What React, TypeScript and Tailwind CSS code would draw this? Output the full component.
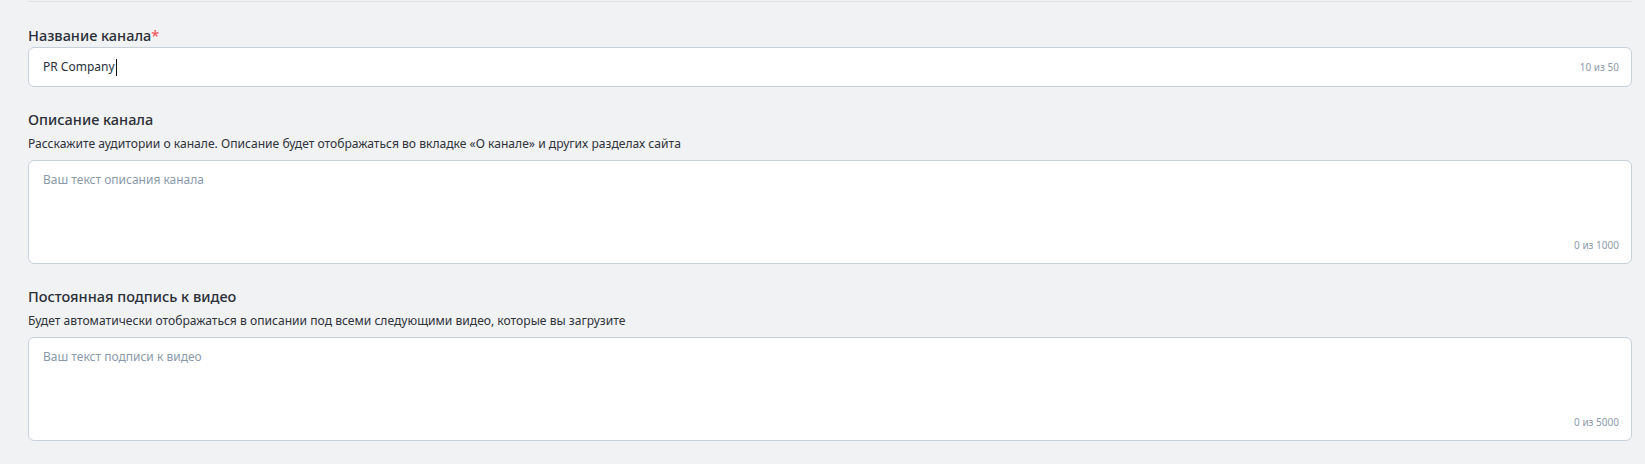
import React from 'react'

interface AreaProps {
  label: string
  hint: string
  placeholder: string
  max: number
}

function AreaField({ label, hint, placeholder, max }: AreaProps): JSX.Element {
  return (
    <div className="mt-[22px]">
      <div className="text-[14.5px] leading-[20px] font-medium text-[#2b2f38]">{label}</div>
      <div className="mt-[7px] text-[12.1px] leading-[16px] text-[#2f333a]">{hint}</div>
      <div className="relative mt-[8px] h-[104px] rounded-[6px] border border-[#c8d0da] bg-white px-[14px] pt-[11px]">
        <div className="text-[12px] leading-[16px] text-[#8a9aab]">{placeholder}</div>
        {/* char counter */}
        <span className="absolute right-[12px] bottom-[12px] text-[10px] leading-[12px] text-[#8e9bab]">
          0 из {max}
        </span>
      </div>
    </div>
  )
}

export default function App(): JSX.Element {
  const name = 'PR Company'

  return (
    <div className="min-h-screen bg-[#f1f2f4] pl-[28px] pr-[13px] pt-[1px] font-['Noto_Sans',sans-serif]">
      <div className="border-t border-[#dfe2e6] pt-[23px]">
        {/* Channel name */}
        <div className="text-[14.5px] leading-[20px] font-medium text-[#2b2f38]">
          Название канала<span className="text-[#f05a5a]">*</span>
        </div>
        <div className="mt-[2px] flex h-[40px] items-center justify-between rounded-[6px] border border-[#c8d0da] bg-white pl-[14px] pr-[12px]">
          <div className="flex items-center text-[12px] leading-[16px] text-[#2a2f3a]">
            {name}
            <span className="ml-[1px] h-[17px] w-[1px] bg-[#111]" />
          </div>
          <span className="text-[10px] leading-[12px] text-[#8e9bab]">{name.length} из 50</span>
        </div>

        <AreaField
          label="Описание канала"
          hint="Расскажите аудитории о канале. Описание будет отображаться во вкладке «О канале» и других разделах сайта"
          placeholder="Ваш текст описания канала"
          max={1000}
        />

        <AreaField
          label="Постоянная подпись к видео"
          hint="Будет автоматически отображаться в описании под всеми следующими видео, которые вы загрузите"
          placeholder="Ваш текст подписи к видео"
          max={5000}
        />
      </div>
    </div>
  )
}
